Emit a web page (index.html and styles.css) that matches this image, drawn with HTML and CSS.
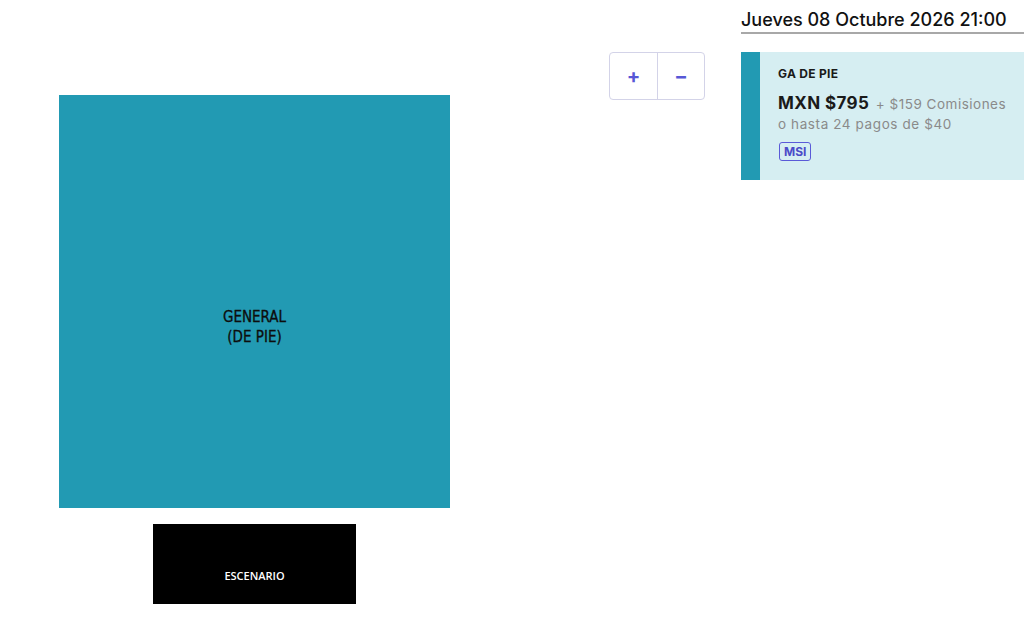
FILE: index.html
```html
<!DOCTYPE html>
<html>
<head>
  <title>Mapa de boletos</title>
  <link rel="stylesheet" href="styles.css">
</head>
<body>
<div class="page">

  <div class="map-area">
    <svg class="seat-map" width="741" height="636" viewBox="0 0 741 636">
      <rect x="59" y="95" width="391" height="413" fill="#229ab3"></rect>
      <text class="section-label" x="254.5" y="322">GENERAL</text>
      <text class="section-label" x="254.5" y="342">(DE PIE)</text>
      <rect x="153" y="524" width="203" height="80" fill="#000"></rect>
      <text class="stage-label" x="254.5" y="580">ESCENARIO</text>
    </svg>

    <div class="zoom-controls">
      <button class="zoom-btn">+</button>
      <button class="zoom-btn">&minus;</button>
    </div>
  </div>

  <div class="side-panel">
    <div class="event-date">Jueves 08 Octubre 2026 21:00</div>

    <div class="ticket-card">
      <div class="ticket-name">GA DE PIE</div>
      <div class="ticket-price">
        <span class="price">MXN $795</span>
        <span class="fees">+ $159 Comisiones</span>
      </div>
      <div class="installments">o hasta 24 pagos de $40</div>
      <span class="msi-badge">MSI</span>
    </div>
  </div>

</div>
</body>
</html>
```

FILE: styles.css
```css
body {
  margin: 0;
  font-family: Inter, "Noto Sans", sans-serif;
  background: #fff;
  color: #1c1c1c;
}
.page {
  display: flex;
  width: 1024px;
  height: 636px;
  overflow: hidden;
}
.map-area {
  position: relative;
  width: 741px;
  flex-shrink: 0;
}
.seat-map {
  display: block;
}
.section-label {
  font-family: "DejaVu Sans Condensed", "Open Sans", sans-serif;
  font-size: 15px;
  fill: #0d0d0d;
  stroke: #0d0d0d;
  stroke-width: 0.3px;
  text-anchor: middle;
}
.stage-label {
  font-family: "Open Sans", sans-serif;
  font-size: 11px;
  font-weight: 600;
  fill: #fff;
  text-anchor: middle;
}
.zoom-controls {
  position: absolute;
  top: 52px;
  right: 36px;
  display: flex;
  border: 1px solid #d3d3e8;
  border-radius: 4px;
  background: #fff;
}
.zoom-btn {
  width: 47px;
  height: 46px;
  border: none;
  background: transparent;
  color: #5757d6;
  font-family: Inter, sans-serif;
  font-size: 20px;
  font-weight: 700;
  padding: 0;
  cursor: pointer;
}
.zoom-btn + .zoom-btn {
  border-left: 1px solid #d3d3e8;
}
.side-panel {
  flex: 1;
}
.event-date {
  padding-top: 8px;
  font-size: 18px;
  font-weight: 500;
  line-height: 24px;
  color: #111;
  border-bottom: 2px solid #a8a8a8;
}
.ticket-card {
  margin-top: 18px;
  height: 128px;
  box-sizing: border-box;
  background: #d6eef2;
  border-left: 19px solid #229ab3;
  padding: 14px 0 0 18px;
}
.ticket-name {
  font-size: 12px;
  font-weight: 700;
  line-height: 16px;
  letter-spacing: 0.3px;
  color: #1a1a1a;
}
.ticket-price {
  margin-top: 11px;
  line-height: 20px;
}
.price {
  font-size: 17px;
  font-weight: 700;
  letter-spacing: 0.4px;
  color: #1a1a1a;
}
.fees {
  font-size: 13.5px;
  color: #8a8a8a;
  letter-spacing: 0.5px;
  margin-left: 2px;
}
.installments {
  font-size: 13.5px;
  color: #8a8a8a;
  line-height: 20px;
  letter-spacing: 0.6px;
}
.msi-badge {
  display: inline-block;
  margin-top: 8px;
  margin-left: 1px;
  padding: 0 4px;
  border: 1.5px solid #5a5ad8;
  border-radius: 3px;
  font-size: 12px;
  font-weight: 700;
  line-height: 17px;
  color: #4b4bc8;
}
```
